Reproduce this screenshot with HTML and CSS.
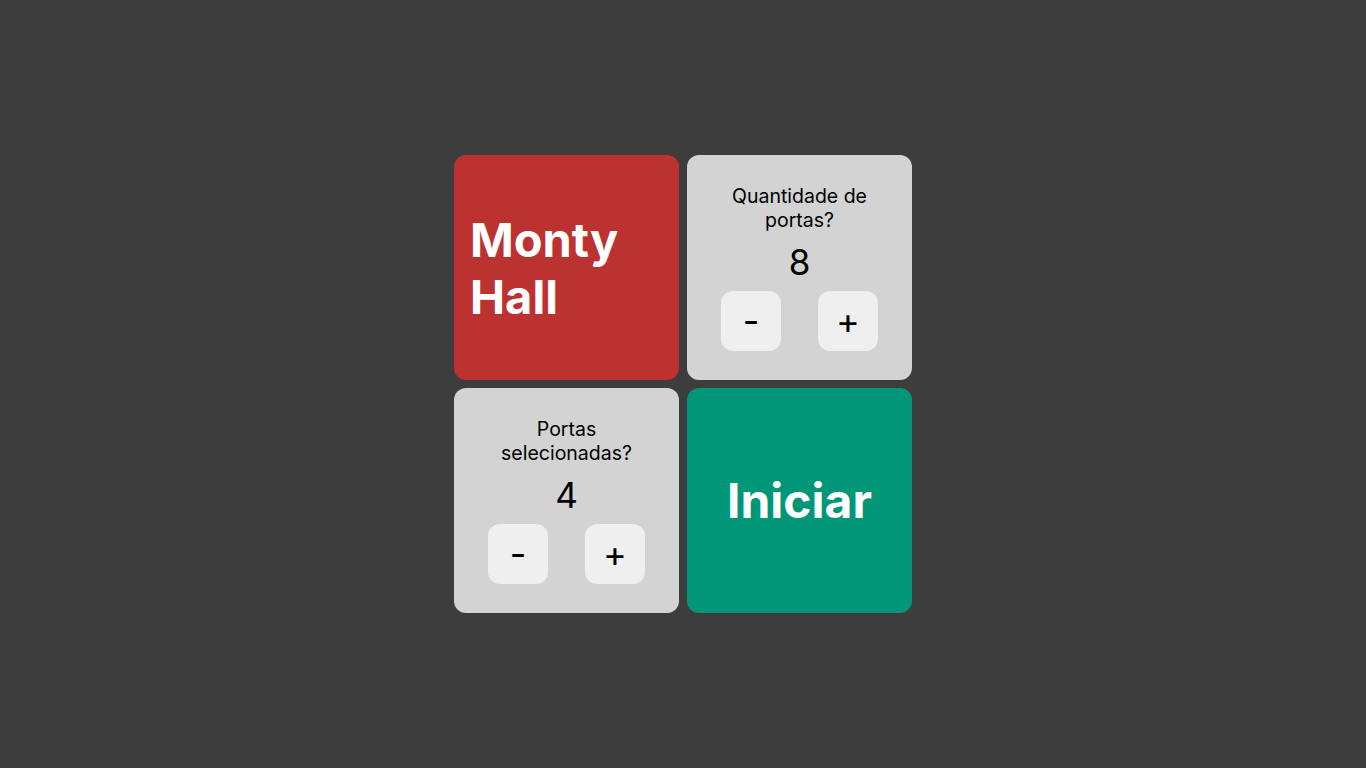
FILE: index.html
```html
<!DOCTYPE html>
<html lang="pt-BR">
<head>
  <meta charset="UTF-8"/>
  <meta name="viewport" content="width=device-width, initial-scale=1.0"/>
  <title>Monty Hall</title>
  <link rel="stylesheet" href="styles.css">
</head>
<body>
  <main class="board">
    <div class="card title">
      <h1>Monty Hall</h1>
    </div>
    <div class="card counter">
      <span class="label">Quantidade de portas?</span>
      <span class="value">8</span>
      <div class="controls">
        <button class="btn">-</button>
        <button class="btn">+</button>
      </div>
    </div>
    <div class="card counter">
      <span class="label">Portas selecionadas?</span>
      <span class="value">4</span>
      <div class="controls">
        <button class="btn">-</button>
        <button class="btn">+</button>
      </div>
    </div>
    <a class="card start" href="#">Iniciar</a>
  </main>
</body>
</html>
```

FILE: styles.css
```css
:root {
  --bg-color: #3d3d3d;
  --card-size: 225px;
  --card-radius: 12px;
  --red: #bb3230;
  --green: #019678;
  --gray: #d3d3d3;
  --btn-bg: #efefef;
}

*, *::before, *::after { box-sizing: border-box; }

body {
  margin: 0;
  font-family: 'Inter', sans-serif;
  background: var(--bg-color);
  height: 100vh;
  display: flex;
  align-items: center;
  justify-content: center;
}

.board {
  display: grid;
  grid-template-columns: repeat(2, var(--card-size));
  grid-template-rows: repeat(2, var(--card-size));
  gap: 8px;
}

.card {
  border-radius: var(--card-radius);
  display: flex;
}

.title {
  background: var(--red);
  align-items: center;
  padding: 16px;
}

h1 {
  margin: 0;
  color: #fff;
  font-size: 47px;
  font-weight: 700;
}

.counter {
  background: var(--gray);
  flex-direction: column;
  align-items: center;
  justify-content: center;
  text-align: center;
  padding: 0 30px;
}

.label {
  font-size: 19.5px;
  color: #000;
}

.value {
  font-size: 35px;
  margin-top: 9px;
  margin-bottom: 8px;
}

.controls {
  display: flex;
  gap: 37px;
}

.btn {
  width: 60px;
  height: 60px;
  border: none;
  border-radius: 12px;
  background: var(--btn-bg);
  font-family: 'Inter', sans-serif;
  font-size: 36px;
  color: #000;
  cursor: pointer;
}

.start {
  background: var(--green);
  color: #fff;
  text-decoration: none;
  font-size: 48px;
  font-weight: 700;
  align-items: center;
  justify-content: center;
}
```
